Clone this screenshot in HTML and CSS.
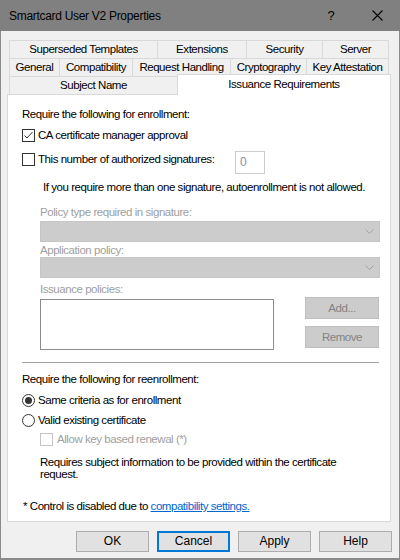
FILE: index.html
```html
<!DOCTYPE html>
<html>
<head>
<meta charset="utf-8">
<link rel="stylesheet" href="styles.css">
</head>
<body>
<div class="window">
  <div class="titlebar">
    <span class="title">Smartcard User V2 Properties</span>
    <span class="tbtn help-q">?</span>
    <span class="tbtn close-x"><svg width="11" height="11" viewBox="0 0 11 11"><path d="M0.5 0.5L10.5 10.5M10.5 0.5L0.5 10.5" stroke="#000" stroke-width="1.1" fill="none"/></svg></span>
  </div>

  <div class="tabs">
    <div class="tabrow">
      <div class="tab t148">Superseded Templates</div>
      <div class="tab t89">Extensions</div>
      <div class="tab t76">Security</div>
      <div class="tab t67 last">Server</div>
    </div>
    <div class="tabrow">
      <div class="tab t50">General</div>
      <div class="tab t73">Compatibility</div>
      <div class="tab t98">Request Handling</div>
      <div class="tab t76">Cryptography</div>
      <div class="tab t83 last">Key Attestation</div>
    </div>
    <div class="tabrow">
      <div class="tab t168">Subject Name</div>
      <div class="tab selected">Issuance Requirements</div>
    </div>
  </div>

  <div class="panel">
    <div class="line lbl-enroll">Require the following for enrollment:</div>

    <div class="check-row cb1">
      <svg class="box" width="13" height="13" viewBox="0 0 13 13"><rect x="0.5" y="0.5" width="12" height="12" fill="#fff" stroke="#333"/><path d="M2.5 6.5L5 9L10.5 3" stroke="#333" stroke-width="1" fill="none"/></svg>
      <span class="line">CA certificate manager approval</span>
    </div>

    <div class="sig-row">
      <div class="check-row">
        <svg class="box" width="13" height="13" viewBox="0 0 13 13"><rect x="0.5" y="0.5" width="12" height="12" fill="#fff" stroke="#333"/></svg>
        <span class="line">This number of authorized signatures:</span>
      </div>
      <div class="num-input">0</div>
    </div>

    <div class="line note">If you require more than one signature, autoenrollment is not allowed.</div>

    <div class="disabled-group">
      <div class="line dis lbl-policy">Policy type required in signature:</div>
      <div class="combo c1"><svg width="9" height="5" viewBox="0 0 9 5"><path d="M0.5 0.5L4.5 4.5L8.5 0.5" stroke="#a0a0a0" fill="none"/></svg></div>
      <div class="line dis lbl-app">Application policy:</div>
      <div class="combo"><svg width="9" height="5" viewBox="0 0 9 5"><path d="M0.5 0.5L4.5 4.5L8.5 0.5" stroke="#a0a0a0" fill="none"/></svg></div>
      <div class="line dis lbl-iss">Issuance policies:</div>
      <div class="iss-row">
        <div class="listbox"></div>
        <div class="side-btns">
          <div class="dbtn">Add...</div>
          <div class="dbtn">Remove</div>
        </div>
      </div>
    </div>

    <div class="sep"></div>

    <div class="line lbl-reenroll">Require the following for reenrollment:</div>

    <div class="check-row r1">
      <svg class="box" width="13" height="13" viewBox="0 0 13 13"><circle cx="6.5" cy="6.5" r="6" fill="#fff" stroke="#333"/><circle cx="6.5" cy="6.5" r="3.5" fill="#333"/></svg>
      <span class="line">Same criteria as for enrollment</span>
    </div>
    <div class="check-row r2">
      <svg class="box" width="13" height="13" viewBox="0 0 13 13"><circle cx="6.5" cy="6.5" r="6" fill="#fff" stroke="#333"/></svg>
      <span class="line">Valid existing certificate</span>
    </div>
    <div class="check-row cb-dis">
      <svg class="box" width="13" height="13" viewBox="0 0 13 13"><rect x="0.5" y="0.5" width="12" height="12" fill="#fff" stroke="#c4c4c4"/></svg>
      <span class="line dis">Allow key based renewal (*)</span>
    </div>

    <div class="info">Requires subject information to be provided within the certificate<br>request.</div>

    <div class="line foot">* Control is disabled due to <span class="link">compatibility settings.</span></div>
  </div>

  <div class="buttons">
    <div class="btn">OK</div>
    <div class="btn default">Cancel</div>
    <div class="btn">Apply</div>
    <div class="btn">Help</div>
  </div>
</div>
</body>
</html>
```
FILE: styles.css
```css
* { box-sizing: border-box; }
html, body { margin: 0; padding: 0; }
body {
  font-family: "Liberation Sans", Arial, sans-serif;
  font-size: 11.5px;
  letter-spacing: -0.45px;
  color: #000;
  background: #fff;
}
.window {
  width: 400px;
  height: 560px;
  background: #f0f0f0;
  border: 1px solid #8a8a8a;
  border-top: none;
  border-bottom-width: 2px;
  display: flex;
  flex-direction: column;
}
.titlebar {
  height: 31px;
  margin: 0 -1px;
  background: #808080;
  display: flex;
  align-items: center;
  padding-left: 9px;
  font-size: 12px;
  letter-spacing: -0.3px;
  color: #000;
}
.title { flex: 1; }
.tbtn {
  width: 46px;
  height: 31px;
  display: flex;
  align-items: center;
  justify-content: center;
}
.help-q { font-size: 13px; }
.close-x svg { display: block; }

.tabs {
  margin: 9px 0 0 8px;
  display: flex;
  flex-direction: column;
}
.tabrow {
  display: flex;
  height: 18px;
  align-items: flex-start;
}
.tab {
  height: 18px;
  border-top: 1px solid #d9d9d9;
  border-left: 1px solid #d9d9d9;
  background: #f0f0f0;
  text-align: center;
  line-height: 17px;
  white-space: nowrap;
}
.tab.last { border-right: 1px solid #d9d9d9; }
.t148 { width: 148px; }
.t89 { width: 89px; }
.t76 { width: 76px; }
.t67 { width: 67px; }
.t50 { width: 50px; }
.t73 { width: 73px; }
.t98 { width: 98px; }
.t83 { width: 83px; }
.t168 { width: 168px; }
.tab.selected {
  width: 214px;
  height: 21px;
  margin-top: -2px;
  background: #fff;
  border-right: 1px solid #d9d9d9;
  position: relative;
  z-index: 1;
  line-height: 19px;
}

.panel {
  margin-left: 6px;
  width: 384px;
  height: 428px;
  background: #fff;
  border: 1px solid #d9d9d9;
  padding-left: 14px;
  display: flex;
  flex-direction: column;
  align-items: flex-start;
}
.line { line-height: 14px; height: 14px; white-space: nowrap; }
.dis { color: #a0a0a0; }

.lbl-enroll { margin-top: 12px; }
.check-row {
  display: flex;
  align-items: center;
  height: 14px;
  gap: 3px;
}
.check-row .box { display: block; flex: none; }
.cb1 { margin-top: 7px; }
.sig-row {
  margin-top: 9px;
  height: 22px;
  display: flex;
  align-items: flex-start;
}
.sig-row .check-row { margin-top: 1px; width: 213px; }
.num-input {
  width: 30px;
  height: 23px;
  border: 1px solid #cccccc;
  background: #fff;
  color: #8090a8;
  padding: 3px 0 0 4px;
  line-height: 14px;
  font-size: 12px;
}
.note { margin-top: 7px; padding-left: 21px; }

.disabled-group {
  padding-left: 18px;
  display: flex;
  flex-direction: column;
  align-items: flex-start;
}
.lbl-policy { margin-top: 11px; }
.combo {
  width: 340px;
  height: 21px;
  background: #cccccc;
  border: 1px solid #c6c6c6;
  display: flex;
  align-items: center;
  justify-content: flex-end;
  padding-right: 5px;
}
.combo svg { display: block; }
.c1 { margin-top: 2px; }
.lbl-app { margin-top: 1px; }
.lbl-iss { margin-top: 4px; }
.iss-row {
  margin-top: 1px;
  display: flex;
  align-items: flex-start;
}
.listbox {
  margin-top: 2px;
  width: 234px;
  height: 51px;
  border: 1px solid #8c8c8c;
  background: #fff;
}
.side-btns {
  margin-left: 31px;
  display: flex;
  flex-direction: column;
  gap: 7px;
}
.dbtn {
  width: 74px;
  height: 22px;
  background: #cccccc;
  border: 1px solid #bfbfbf;
  color: #838383;
  text-align: center;
  line-height: 20px;
}

.sep {
  margin-top: 12px;
  width: 357px;
  height: 1px;
  background: #a0a0a0;
}
.lbl-reenroll { margin-top: 9px; }
.r1 { margin-top: 7px; }
.r2 { margin-top: 6px; }
.cb-dis { margin-top: 5px; margin-left: 18px; gap: 4px; }
.info {
  margin-top: 10px;
  margin-left: 18px;
  line-height: 12px;
}
.foot { margin-top: 19px; margin-left: 1px; }
.link { color: #0066cc; text-decoration: underline; }

.buttons {
  margin-top: 9px;
  display: flex;
  gap: 8px;
  padding-left: 75px;
}
.btn {
  width: 73px;
  height: 21px;
  background: #e1e1e1;
  border: 1px solid #adadad;
  text-align: center;
  line-height: 19px;
  font-size: 12px;
  letter-spacing: 0;
}
.btn.default {
  border: 2px solid #0078d7;
  line-height: 17px;
}
```
